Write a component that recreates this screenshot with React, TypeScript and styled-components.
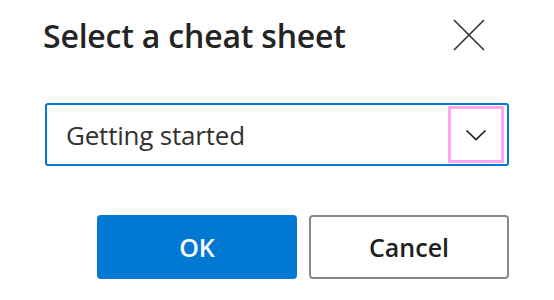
import styled, { createGlobalStyle } from "styled-components"

const GlobalStyle = createGlobalStyle`
    html, body {
        margin: 0;
        padding: 0;
        background: #fff;
    }
    body {
        font-family: "Open Sans", "Noto Sans", sans-serif;
        color: #323130;
    }
    * { box-sizing: border-box; }
`

const Dialog = styled.div`
    width: 554px;
    height: 300px;
    padding: 15px 45px 0 45px;
    display: flex;
    flex-direction: column;
`
const Header = styled.div`
    display: flex;
    align-items: center;
    justify-content: space-between;
    height: 40px;
`
const Title = styled.h1`
    margin: 0 0 0 -2px;
    font-size: 32px;
    font-weight: 600;
    color: #242424;
    letter-spacing: -0.2px;
`
const Close = styled.button`
    border: none;
    background: none;
    padding: 0;
    margin-right: 23px;
    width: 34px;
    height: 34px;
    display: flex;
    align-items: center;
    justify-content: center;
    cursor: pointer;
`
const Select = styled.div`
    margin-top: 48px;
    height: 63px;
    border: 2px solid #0078d4;
    border-radius: 3px;
    display: flex;
    align-items: center;
    padding: 0 3px 0 19px;
`
const SelectValue = styled.span`
    flex: 1;
    font-size: 26px;
    color: #323130;
    letter-spacing: -0.2px;
`
const Chevron = styled.span`
    width: 56px;
    height: 57px;
    border: 3px solid #ffa6f6;
    display: flex;
    align-items: center;
    justify-content: center;
`
const Actions = styled.div`
    margin-top: 49px;
    display: flex;
    justify-content: flex-end;
    gap: 12px;
`
const Button = styled.button<{ $primary?: boolean }>`
    width: 200px;
    height: 64px;
    border-radius: 4px;
    font-family: "Open Sans", "Noto Sans", sans-serif;
    font-size: 25px;
    font-weight: 600;
    cursor: pointer;
    border: ${p => p.$primary ? 'none' : '2px solid #8a8886'};
    background: ${p => p.$primary ? '#0078d4' : '#fff'};
    color: ${p => p.$primary ? '#fff' : '#201f1e'};
`

export default function App() {
    return (
        <>
            <GlobalStyle />
            <Dialog>
                <Header>
                    <Title>Select a cheat sheet</Title>
                    <Close aria-label="Close">
                        <svg width="32" height="32" viewBox="0 0 32 32">
                            <path d="M1 1 L31 31 M31 1 L1 31" stroke="#323130" strokeWidth="1.6" fill="none" />
                        </svg>
                    </Close>
                </Header>
                <Select>
                    <SelectValue>Getting started</SelectValue>
                    <Chevron>
                        <svg width="22" height="12" viewBox="0 0 22 12">
                            <path d="M1.5 1.5 L11 10.5 L20.5 1.5" stroke="#201f1e" strokeWidth="1.7" fill="none" />
                        </svg>
                    </Chevron>
                </Select>
                <Actions>
                    <Button $primary>OK</Button>
                    <Button>Cancel</Button>
                </Actions>
            </Dialog>
        </>
    )
}
